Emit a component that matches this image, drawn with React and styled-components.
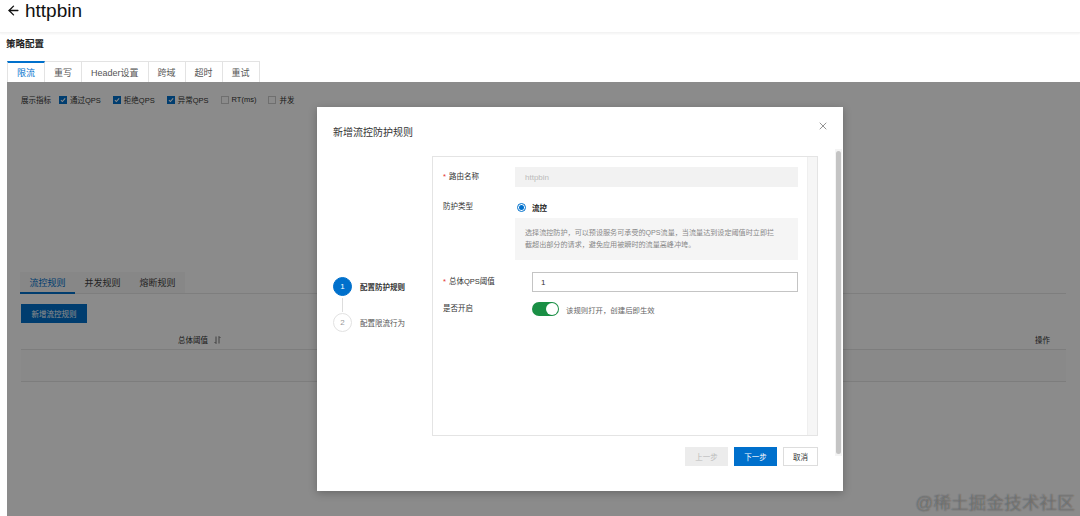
import React from "react";
import styled, { createGlobalStyle } from "styled-components";
import { ArrowLeft, X } from "lucide-react";

const GlobalStyle = createGlobalStyle`
  html, body {
    margin: 0;
    padding: 0;
    height: 100%;
    background: #fff;
    font-family: "Liberation Sans", "Noto Sans CJK SC", sans-serif;
    color: #333;
  }
  #root { height: 100%; }
  * { box-sizing: border-box; }
`;

const BLUE = "#0070cc";

// === Page frame ===
const Page = styled.div`
  height: 516px;
  display: flex;
  flex-direction: column;
  overflow: hidden;
  position: relative;
`;

const Header = styled.div`
  height: 33px;
  display: flex;
  align-items: center;
  gap: 4px;
  padding: 0 6px 11px;
  box-shadow: 0 1px 2px rgba(0, 0, 0, 0.05);
  border-bottom: 1px solid #f3f3f3;
`;

const HeaderTitle = styled.h1`
  margin: 0;
  font-size: 19px;
  font-weight: 500;
  color: #111;
  line-height: 1;
`;

const SectionTitle = styled.div`
  font-size: 9.5px;
  font-weight: 700;
  color: #222;
  padding: 3px 6px 0;
  height: 28px;
`;

const TabBar = styled.div`
  display: flex;
  margin-left: 7px;
  height: 21px;
`;

const Tab = styled.div`
  padding: 0 9px;
  min-width: 37px;
  display: flex;
  align-items: center;
  justify-content: center;
  font-size: 9px;
  color: ${({ $active }) => ($active ? BLUE : "#555")};
  border: 1px solid #e3e3e3;
  border-left: none;
  border-top: ${({ $active }) => ($active ? `2px solid ${BLUE}` : "1px solid #e3e3e3")};
  border-bottom: none;
  &:first-child { border-left: 1px solid #e3e3e3; }
`;

// === Tab body (behind the mask) ===
const Body = styled.div`
  flex: 1;
  position: relative;
  margin-left: 7px;
  padding: 12px 14px 0;
`;

const MetricRow = styled.div`
  display: flex;
  align-items: center;
  font-size: 7.5px;
  color: #333;
  height: 11px;
`;

const MetricLabel = styled.span`
  margin-right: 8px;
`;

const Metric = styled.label`
  display: flex;
  align-items: center;
  gap: 3px;
  margin-right: 12px;
`;

const Check = styled.span`
  width: 8px;
  height: 8px;
  border: 1px solid ${({ $on }) => ($on ? BLUE : "#ccc")};
  background: ${({ $on }) => ($on ? BLUE : "#fff")};
  display: flex;
  align-items: center;
  justify-content: center;
`;

const ChartSpace = styled.div`
  height: 167px;
`;

const RuleTabs = styled.div`
  display: flex;
  border-bottom: 1px solid #e8e8e8;
  height: 22px;
`;

const RuleTabGroup = styled.div`
  display: flex;
  background: #f7f7f7;
  margin-left: -1px;
`;

const RuleTab = styled.div`
  padding: 0 9.5px;
  display: flex;
  align-items: center;
  font-size: 9px;
  color: ${({ $active }) => ($active ? BLUE : "#444")};
  border-bottom: 2px solid ${({ $active }) => ($active ? BLUE : "transparent")};
  margin-bottom: -1px;
`;

const PrimaryButton = styled.button`
  height: 19px;
  padding: 0 8px;
  border: 1px solid ${({ $disabled }) => ($disabled ? "#ececec" : BLUE)};
  background: ${({ $disabled }) => ($disabled ? "#ececec" : BLUE)};
  color: ${({ $disabled }) => ($disabled ? "#bbb" : "#fff")};
  font-family: inherit;
  font-size: 7.5px;
  display: flex;
  align-items: center;
  justify-content: center;
  min-width: ${({ $w }) => $w || 0}px;
`;

const GhostButton = styled(PrimaryButton)`
  background: #fff;
  border: 1px solid #ddd;
  color: #333;
`;

const Toolbar = styled.div`
  padding-top: 10px;
  display: flex;
`;

const Table = styled.div`
  margin-top: 7px;
`;

const TableHead = styled.div`
  display: grid;
  grid-template-columns: 1fr 31px;
  height: 20px;
  align-items: center;
  font-size: 7.5px;
  color: #333;
  border-bottom: 1px solid #e5e5e5;
`;

const HeadCell = styled.div`
  display: flex;
  align-items: center;
  gap: 6px;
  padding-left: ${({ $pl }) => $pl || 0}px;
`;

const EmptyRow = styled.div`
  height: 32px;
  background: #fbfbfb;
  border-bottom: 1px solid #e5e5e5;
`;

const Mask = styled.div`
  position: absolute;
  inset: 0;
  background: rgba(0, 0, 0, 0.455);
`;

const Watermark = styled.div`
  position: absolute;
  right: 5px;
  bottom: 2px;
  font-size: 17.5px;
  color: rgba(255, 255, 255, 0.22);
  text-shadow: 0 0 1px rgba(40, 40, 40, 0.7);
  letter-spacing: 0.2px;
`;

// === Dialog ===
const Dialog = styled.div`
  position: absolute;
  left: 310px;
  top: 25px;
  width: 526px;
  height: 384px;
  background: #fff;
  box-shadow: 0 2px 8px rgba(0, 0, 0, 0.25);
  display: flex;
  flex-direction: column;
`;

const DialogHeader = styled.div`
  height: 42px;
  display: flex;
  align-items: flex-start;
  justify-content: space-between;
  padding: 17px 14px 0 16px;
`;

const DialogTitle = styled.div`
  font-size: 10px;
  color: #333;
`;

const Close = styled.div`
  margin-top: -4px;
  color: #666;
  display: flex;
`;

const DialogBody = styled.div`
  flex: 1;
  display: flex;
`;

const DialogMain = styled.div`
  width: 501px;
  display: flex;
  flex-direction: column;
  padding: 7px 0 0 16px;
`;

const Scroll = styled.div`
  flex: 1;
  padding: 0 0 35px 17px;
`;

const ScrollTrack = styled.div`
  width: 7px;
  height: 100%;
  background: #f4f4f4;
  padding: 2px 1px;
`;

const ScrollThumb = styled.div`
  height: 100%;
  background: #c4c4c4;
  border-radius: 3px;
`;

const Content = styled.div`
  display: flex;
`;

const Steps = styled.div`
  width: 99px;
  padding-top: 121px;
  display: flex;
  flex-direction: column;
`;

const Step = styled.div`
  display: flex;
  align-items: center;
  gap: 8px;
  font-size: 7.5px;
  font-weight: ${({ $active }) => ($active ? 700 : 400)};
  color: ${({ $active }) => ($active ? "#333" : "#555")};
`;

const StepDot = styled.span`
  width: 19px;
  height: 19px;
  border-radius: 50%;
  display: flex;
  align-items: center;
  justify-content: center;
  font-size: 8px;
  font-weight: 400;
  background: ${({ $active }) => ($active ? BLUE : "#fff")};
  color: ${({ $active }) => ($active ? "#fff" : "#999")};
  border: 1px solid ${({ $active }) => ($active ? BLUE : "#e2e2e2")};
`;

const StepLine = styled.span`
  width: 1px;
  height: 14px;
  background: #ddd;
  margin: 2px 0 1px 9px;
`;

const Panel = styled.div`
  width: 386px;
  height: 280px;
  border: 1px solid #e4e4e4;
  display: flex;
`;

const Form = styled.div`
  flex: 1;
  padding: 10px 9px 0 10px;
`;

const PanelTrack = styled.div`
  width: 10px;
  background: #f6f6f6;
  border-left: 1px solid #efefef;
`;

const FormRow = styled.div`
  display: flex;
  align-items: ${({ $top }) => ($top ? "flex-start" : "center")};
  margin-bottom: ${({ $mb }) => $mb || 0}px;
`;

const Label = styled.div`
  width: ${({ $w }) => $w}px;
  flex-shrink: 0;
  font-size: 7.5px;
  color: #333;
  display: flex;
  align-items: center;
  line-height: 20px;
`;

const Star = styled.span`
  color: #e5312d;
  margin-right: 3px;
`;

const Control = styled.div`
  flex: 1;
  display: flex;
  flex-direction: column;
`;

const Input = styled.div`
  height: 20px;
  display: flex;
  align-items: center;
  padding-left: ${({ $disabled }) => ($disabled ? 9 : 8)}px;
  font-size: 8px;
  background: ${({ $disabled }) => ($disabled ? "#f2f2f2" : "#fff")};
  color: ${({ $disabled }) => ($disabled ? "#bbb" : "#333")};
  border: 1px solid ${({ $disabled }) => ($disabled ? "#f2f2f2" : "#c4c4c4")};
`;

const RadioLine = styled.div`
  height: 20px;
  display: flex;
  align-items: center;
  gap: 6px;
  padding-left: 2px;
  font-size: 7.5px;
  font-weight: 700;
  color: #222;
`;

const Radio = styled.span`
  width: 9px;
  height: 9px;
  border-radius: 50%;
  border: 1px solid ${BLUE};
  display: flex;
  align-items: center;
  justify-content: center;
  &::after {
    content: "";
    width: 5px;
    height: 5px;
    border-radius: 50%;
    background: ${BLUE};
  }
`;

const Hint = styled.div`
  margin-top: 1px;
  height: 42px;
  background: #f5f5f5;
  padding: 9px 10px;
  font-size: 7.1px;
  line-height: 12px;
  color: #888;
`;

const SwitchRow = styled.div`
  display: flex;
  align-items: center;
  gap: 7px;
  font-size: 7.4px;
  color: #666;
  height: 20px;
`;

const Switch = styled.span`
  width: 27px;
  height: 14px;
  border-radius: 7px;
  background: #1a8f45;
  position: relative;
  &::after {
    content: "";
    position: absolute;
    right: 1px;
    top: 1px;
    width: 12px;
    height: 12px;
    border-radius: 50%;
    background: #fff;
  }
`;

const Footer = styled.div`
  display: flex;
  justify-content: flex-end;
  gap: 6px;
  margin-top: 11px;
`;

function Tick() {
  return (
    <svg width="6" height="6" viewBox="0 0 10 10">
      <path d="M1.5 5.2 4 7.6 8.6 2.4" fill="none" stroke="#fff" strokeWidth="1.8" />
    </svg>
  );
}

function SortIcon() {
  return (
    <svg width="7" height="8" viewBox="0 0 7 8">
      <path d="M2 0.5v7M0.5 6 2 7.5M5 7.5v-7M5 0.5 6.5 2" stroke="#666" fill="none" strokeWidth="0.9" />
    </svg>
  );
}

const topTabs = ["限流", "重写", "Header设置", "跨域", "超时", "重试"];
const metrics = [
  { label: "通过QPS", on: true },
  { label: "拒绝QPS", on: true },
  { label: "异常QPS", on: true },
  { label: "RT(ms)", on: false },
  { label: "并发", on: false },
];

export default function App() {
  return (
    <>
      <GlobalStyle />
      <Page>
        <Header>
          <ArrowLeft size={15} strokeWidth={2.2} color="#111" />
          <HeaderTitle>httpbin</HeaderTitle>
        </Header>
        <SectionTitle>策略配置</SectionTitle>
        <TabBar>
          {topTabs.map((t, i) => (
            <Tab key={t} $active={i === 0}>
              {t}
            </Tab>
          ))}
        </TabBar>
        <Body>
          <MetricRow>
            <MetricLabel>展示指标</MetricLabel>
            {metrics.map((m) => (
              <Metric key={m.label}>
                <Check $on={m.on}>{m.on && <Tick />}</Check>
                {m.label}
              </Metric>
            ))}
          </MetricRow>
          <ChartSpace />
          <RuleTabs>
            <RuleTabGroup>
              <RuleTab $active>流控规则</RuleTab>
              <RuleTab>并发规则</RuleTab>
              <RuleTab>熔断规则</RuleTab>
            </RuleTabGroup>
          </RuleTabs>
          <Toolbar>
            <PrimaryButton $w={66}>新增流控规则</PrimaryButton>
          </Toolbar>
          <Table>
            <TableHead>
              <HeadCell $pl={157}>
                总体阈值 <SortIcon />
              </HeadCell>
              <HeadCell>操作</HeadCell>
            </TableHead>
            <EmptyRow />
          </Table>

          <Mask />
          <Watermark>@稀土掘金技术社区</Watermark>

          <Dialog>
            <DialogHeader>
              <DialogTitle>新增流控防护规则</DialogTitle>
              <Close>
                <X size={12} strokeWidth={1.4} />
              </Close>
            </DialogHeader>
            <DialogBody>
              <DialogMain>
                <Content>
                  <Steps>
                    <Step $active>
                      <StepDot $active>1</StepDot>
                      配置防护规则
                    </Step>
                    <StepLine />
                    <Step>
                      <StepDot>2</StepDot>
                      配置限流行为
                    </Step>
                  </Steps>
                  <Panel>
                    <Form>
                      <FormRow $mb={10}>
                        <Label $w={72}>
                          <Star>*</Star>路由名称
                        </Label>
                        <Control>
                          <Input $disabled>httpbin</Input>
                        </Control>
                      </FormRow>
                      <FormRow $top $mb={12}>
                        <Label $w={72}>防护类型</Label>
                        <Control>
                          <RadioLine>
                            <Radio />
                            流控
                          </RadioLine>
                          <Hint>
                            选择流控防护，可以预设服务可承受的QPS流量，当流量达到设定阈值时立即拦
                            <br />
                            截超出部分的请求，避免应用被瞬时的流量高峰冲垮。
                          </Hint>
                        </Control>
                      </FormRow>
                      <FormRow $mb={7}>
                        <Label $w={89}>
                          <Star>*</Star>总体QPS阈值
                        </Label>
                        <Control>
                          <Input>1</Input>
                        </Control>
                      </FormRow>
                      <FormRow>
                        <Label $w={89}>是否开启</Label>
                        <Control>
                          <SwitchRow>
                            <Switch />
                            该规则打开，创建后即生效
                          </SwitchRow>
                        </Control>
                      </FormRow>
                    </Form>
                    <PanelTrack />
                  </Panel>
                </Content>
                <Footer>
                  <PrimaryButton $disabled $w={43}>上一步</PrimaryButton>
                  <PrimaryButton $w={43}>下一步</PrimaryButton>
                  <GhostButton $w={35}>取消</GhostButton>
                </Footer>
              </DialogMain>
              <Scroll>
                <ScrollTrack>
                  <ScrollThumb />
                </ScrollTrack>
              </Scroll>
            </DialogBody>
          </Dialog>
        </Body>
      </Page>
    </>
  );
}
